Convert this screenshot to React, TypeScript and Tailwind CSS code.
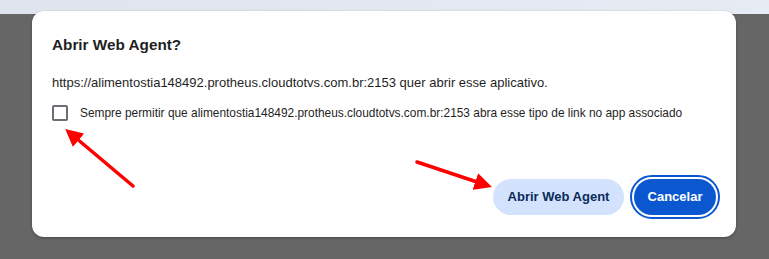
export default function App() {
  return (
    <div className="relative w-[769px] h-[259px] overflow-hidden bg-[#666666] font-['Segoe_UI','Liberation_Sans',sans-serif]">
      {/* browser strip behind the overlay */}
      <div className="h-[14px] bg-gradient-to-r from-[#dfe4ee] to-[#e6ebf4]" />

      {/* Dialog */}
      <div className="absolute left-[32px] top-[11px] w-[704px] h-[226px] rounded-[12px] bg-white shadow-[0_1px_3px_rgba(0,0,0,0.3)] px-[20px] pt-[23px]">
        <h2 className="text-[15.3px] font-bold text-[#1f1f1f] leading-[22px]">Abrir Web Agent?</h2>
        <p className="mt-[18px] text-[13px] text-[#1f1f1f] leading-[18px]">
          https://alimentostia148492.protheus.cloudtotvs.com.br:2153 quer abrir esse aplicativo.
        </p>
        <label className="mt-[13px] flex items-center gap-[12px]">
          <span className="w-[16px] h-[16px] rounded-[2px] border-2 border-[#6b6e72] bg-white" />
          <span className="text-[11.9px] text-[#1f1f1f] leading-[16px]">
            Sempre permitir que alimentostia148492.protheus.cloudtotvs.com.br:2153 abra esse tipo de link no app associado
          </span>
        </label>
        <div className="mt-[54px] flex justify-end items-center gap-[6px] -mr-[4px]">
          <button className="h-[36px] w-[131px] rounded-full bg-[#d3e3fd] text-[13px] font-semibold text-[#0a2b5a]">
            Abrir Web Agent
          </button>
          <span className="rounded-full border-2 border-[#0b57d0] p-[2px]">
            <button className="block h-[36px] w-[82px] rounded-full bg-[#0b57d0] text-[13px] font-semibold text-white">
              Cancelar
            </button>
          </span>
        </div>
      </div>

      {/* Red annotation arrows */}
      <svg className="absolute inset-0 pointer-events-none" width="769" height="259" viewBox="0 0 769 259">
        <defs>
          <marker id="head" markerWidth="5" markerHeight="5" refX="3.2" refY="2.5" orient="auto" markerUnits="strokeWidth">
            <path d="M0,0 L5,2.5 L0,5 Z" fill="#ff0000" />
          </marker>
        </defs>
        <line x1="133" y1="186" x2="70" y2="133" stroke="#ff0000" strokeWidth="3.5" strokeLinecap="round" markerEnd="url(#head)" />
        <line x1="417" y1="162" x2="486" y2="185" stroke="#ff0000" strokeWidth="3.5" strokeLinecap="round" markerEnd="url(#head)" />
      </svg>
    </div>
  );
}
